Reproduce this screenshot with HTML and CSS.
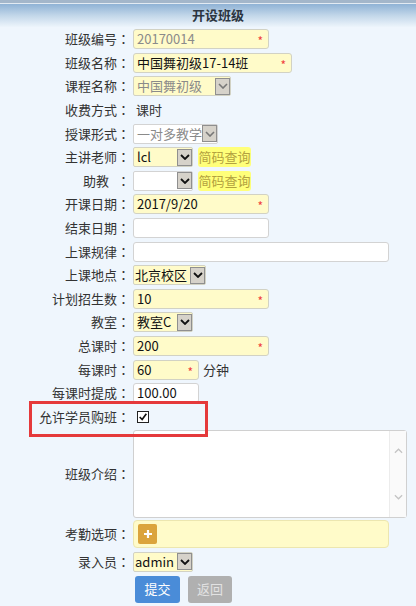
FILE: index.html
```html
<!DOCTYPE html>
<html lang="zh-CN">
<head>
<meta charset="utf-8">
<title>开设班级</title>
<link rel="stylesheet" href="styles.css">
</head>
<body>
<div class="header"><span class="title">开设班级</span></div>
<div class="form">
  <div class="row"><span class="lbl">班级编号<span class="colon" lang="zh-TW">：</span></span><div class="inp yellow dis w136"><span class="val">20170014</span><i class="req">*</i></div></div>
  <div class="row"><span class="lbl">班级名称<span class="colon" lang="zh-TW">：</span></span><div class="inp yellow w159"><span class="val">中国舞初级17-14班</span><i class="req">*</i></div></div>
  <div class="row"><span class="lbl">课程名称<span class="colon" lang="zh-TW">：</span></span><div class="sel yellow dis w98"><span class="val">中国舞初级</span><span class="arrow"><svg viewBox="0 0 10 6" width="10" height="6"><path d="M1 1 L5 5 L9 1" fill="none" stroke="#777" stroke-width="1.6"/></svg></span></div></div>
  <div class="row"><span class="lbl">收费方式<span class="colon" lang="zh-TW">：</span></span><span class="plain">课时</span></div>
  <div class="row"><span class="lbl">授课形式<span class="colon" lang="zh-TW">：</span></span><div class="sel white dis w85"><span class="val">一对多教学</span><span class="arrow"><svg viewBox="0 0 10 6" width="10" height="6"><path d="M1 1 L5 5 L9 1" fill="none" stroke="#777" stroke-width="1.6"/></svg></span></div></div>
  <div class="row"><span class="lbl">主讲老师<span class="colon" lang="zh-TW">：</span></span><div class="sel yellow w60"><span class="val">lcl</span><span class="arrow"><svg viewBox="0 0 10 6" width="10" height="6"><path d="M1 1 L5 5 L9 1" fill="none" stroke="#111" stroke-width="1.8"/></svg></span></div><span class="lookup">简码查询</span></div>
  <div class="row"><span class="lbl">助教<span class="sp"></span><span class="colon" lang="zh-TW">：</span></span><div class="sel white w60"><span class="val"></span><span class="arrow"><svg viewBox="0 0 10 6" width="10" height="6"><path d="M1 1 L5 5 L9 1" fill="none" stroke="#111" stroke-width="1.8"/></svg></span></div><span class="lookup">简码查询</span></div>
  <div class="row"><span class="lbl">开课日期<span class="colon" lang="zh-TW">：</span></span><div class="inp yellow w136"><span class="val">2017/9/20</span><i class="req">*</i></div></div>
  <div class="row"><span class="lbl">结束日期<span class="colon" lang="zh-TW">：</span></span><div class="inp white w136"><span class="val"></span></div></div>
  <div class="row"><span class="lbl">上课规律<span class="colon" lang="zh-TW">：</span></span><div class="inp white w256"><span class="val"></span></div></div>
  <div class="row"><span class="lbl">上课地点<span class="colon" lang="zh-TW">：</span></span><div class="sel yellow w73 tight"><span class="val">北京校区</span><span class="arrow"><svg viewBox="0 0 10 6" width="10" height="6"><path d="M1 1 L5 5 L9 1" fill="none" stroke="#111" stroke-width="1.8"/></svg></span></div></div>
  <div class="row"><span class="lbl">计划招生数<span class="colon" lang="zh-TW">：</span></span><div class="inp yellow w136"><span class="val">10</span><i class="req">*</i></div></div>
  <div class="row"><span class="lbl">教室<span class="colon" lang="zh-TW">：</span></span><div class="sel yellow w60"><span class="val">教室C</span><span class="arrow"><svg viewBox="0 0 10 6" width="10" height="6"><path d="M1 1 L5 5 L9 1" fill="none" stroke="#111" stroke-width="1.8"/></svg></span></div></div>
  <div class="row"><span class="lbl">总课时<span class="colon" lang="zh-TW">：</span></span><div class="inp yellow w136"><span class="val">200</span><i class="req">*</i></div></div>
  <div class="row"><span class="lbl">每课时<span class="colon" lang="zh-TW">：</span></span><div class="inp yellow w66"><span class="val">60</span><i class="req">*</i></div><span class="unit">分钟</span></div>
  <div class="row"><span class="lbl">每课时提成<span class="colon" lang="zh-TW">：</span></span><div class="inp white w66"><span class="val">100.00</span></div></div>
  <div class="row"><span class="lbl">允许学员购班<span class="colon" lang="zh-TW">：</span></span><span class="check"><svg viewBox="0 0 12 12" width="10" height="10"><path d="M2 6 L5 9 L10 2" fill="none" stroke="#111" stroke-width="2"/></svg></span></div>
  <div class="row tall"><span class="lbl">班级介绍<span class="colon" lang="zh-TW">：</span></span><div class="textarea"><div class="ta-body"></div><div class="ta-bar"><svg viewBox="0 0 10 6" width="9" height="6"><path d="M1 5 L5 1 L9 5" fill="none" stroke="#c4c4c4" stroke-width="1.4"/></svg><svg viewBox="0 0 10 6" width="9" height="6"><path d="M1 1 L5 5 L9 1" fill="none" stroke="#c4c4c4" stroke-width="1.4"/></svg></div></div></div>
  <div class="row att"><span class="lbl">考勤选项<span class="colon" lang="zh-TW">：</span></span><div class="attbox"><span class="plus"><svg viewBox="0 0 10 10" width="10" height="10"><path d="M5 1 V9 M1 5 H9" stroke="#fff" stroke-width="2.2"/></svg></span></div></div>
  <div class="row rec"><span class="lbl">录入员<span class="colon" lang="zh-TW">：</span></span><div class="sel yellow w60 tight"><span class="val dark">admin</span><span class="arrow"><svg viewBox="0 0 10 6" width="10" height="6"><path d="M1 1 L5 5 L9 1" fill="none" stroke="#111" stroke-width="1.8"/></svg></span></div></div>
  <div class="btns"><span class="btn submit">提交</span><span class="btn back">返回</span></div>
</div>
<div class="highlight"></div>
</body>
</html>
```

FILE: styles.css
```css
html, body {
  margin: 0;
  padding: 0;
}
body {
  width: 416px;
  height: 606px;
  overflow: hidden;
  background: #eff6fd;
  font-family: "Noto Sans CJK SC", "Noto Sans", sans-serif;
  font-size: 13px;
  color: #333;
  position: relative;
}
.header {
  height: 27.5px;
  background: linear-gradient(to bottom, #a3b6ca 0, #a3b6ca 3px, #e2eaf2 3px, #e2eaf2 4px, #8fb2d5 4px, #c4d8ea 16px, #e9f2fa 26px, #eff6fd 27.5px);
  display: flex;
  align-items: center;
  justify-content: center;
  padding-left: 20px;
  box-sizing: border-box;
}
.title {
  font-weight: bold;
  font-size: 13px;
  color: #2b3440;
  line-height: 16px;
  margin-top: 3px;
}
.form {
  display: flex;
  flex-direction: column;
}
.row {
  height: 23.6px;
  display: flex;
  align-items: center;
}
.lbl {
  width: 130px;
  margin-right: 3px;
  text-align: right;
  white-space: nowrap;
  flex: none;
  line-height: 18px;
  color: #333;
}
.colon {
  font-family: "Noto Sans CJK TC", "Noto Sans CJK SC", sans-serif;
  font-feature-settings: "locl" 0;
}
.sp {
  display: inline-block;
  width: 8px;
}
.inp, .sel {
  height: 20px;
  box-sizing: border-box;
  display: flex;
  align-items: center;
  border: 1px solid #d2d2c4;
  border-radius: 3px;
  flex: none;
  line-height: 18px;
  color: #111;
}
.yellow { background: #fffbc9; }
.white { background: #fff; border-color: #d3d3d3; }
.dis .val { color: #8a8a8a; }
.val {
  padding-left: 3px;
  white-space: nowrap;
  flex: 1;
  min-width: 0;
}
.tight .val { padding-left: 1px; }
.val.dark { color: #111; }
.req {
  font-style: normal;
  color: #f04040;
  font-size: 12px;
  line-height: 12px;
  margin-right: 5px;
  margin-top: 4px;
}
.w136 { width: 136px; }
.w159 { width: 159px; }
.w98 { width: 98px; }
.w85 { width: 85px; }
.w60 { width: 60px; }
.w256 { width: 256px; }
.w73 { width: 73px; }
.w66 { width: 66px; }
.sel { border-radius: 2px; }
.arrow {
  width: 15px;
  height: 17px;
  box-sizing: border-box;
  background: #d6d2ca;
  border: 1px solid #8f8f8f;
  display: flex;
  align-items: center;
  justify-content: center;
  flex: none;
}
.plain {
  padding-left: 3px;
  color: #333;
  line-height: 18px;
}
.lookup {
  margin-left: 5px;
  width: 53px;
  height: 20px;
  box-sizing: border-box;
  background: #ffff7a;
  border-radius: 3px;
  color: #b3a23f;
  display: flex;
  align-items: center;
  justify-content: center;
  line-height: 18px;
  white-space: nowrap;
}
.unit {
  margin-left: 4px;
  color: #333;
  line-height: 18px;
}
.check {
  margin-left: 4px;
  width: 12px;
  height: 12px;
  box-sizing: border-box;
  border: 1px solid #222;
  background: #fff;
  display: flex;
  align-items: center;
  justify-content: center;
}
.row.tall { height: 90px; }
.textarea {
  width: 274px;
  height: 88px;
  box-sizing: border-box;
  border: 1px solid #d0d0d0;
  border-radius: 3px;
  background: #fff;
  display: flex;
}
.ta-body { flex: 1; }
.ta-bar {
  width: 16px;
  background: #fafafa;
  border-left: 1px solid #ececec;
  display: flex;
  flex-direction: column;
  justify-content: space-between;
  align-items: center;
  padding: 17px 0 17px;
}
.row.att { height: 31px; }
.attbox {
  width: 256px;
  height: 28px;
  box-sizing: border-box;
  background: #fffbc9;
  border: 1px solid #ece6b0;
  border-radius: 4px;
  display: flex;
  align-items: center;
}
.plus {
  margin-left: 4px;
  width: 19px;
  height: 20px;
  background: #dba43c;
  border-radius: 2px;
  display: flex;
  align-items: center;
  justify-content: center;
}
.row.rec { height: 24px; }
.btns {
  display: flex;
  padding-left: 135px;
  margin-top: 2.3px;
  gap: 8px;
}
.btn {
  width: 45px;
  height: 27px;
  border-radius: 3px;
  display: flex;
  align-items: center;
  justify-content: center;
  font-size: 13px;
  line-height: 18px;
}
.submit {
  background: #4a8cd8;
  color: #fff;
}
.back {
  background: #b0b0b0;
  color: #e2e2e2;
  width: 44px;
}
.highlight {
  position: absolute;
  left: 29px;
  top: 401px;
  width: 179px;
  height: 36px;
  box-sizing: border-box;
  border: 3px solid #e5393b;
  pointer-events: none;
}
```
